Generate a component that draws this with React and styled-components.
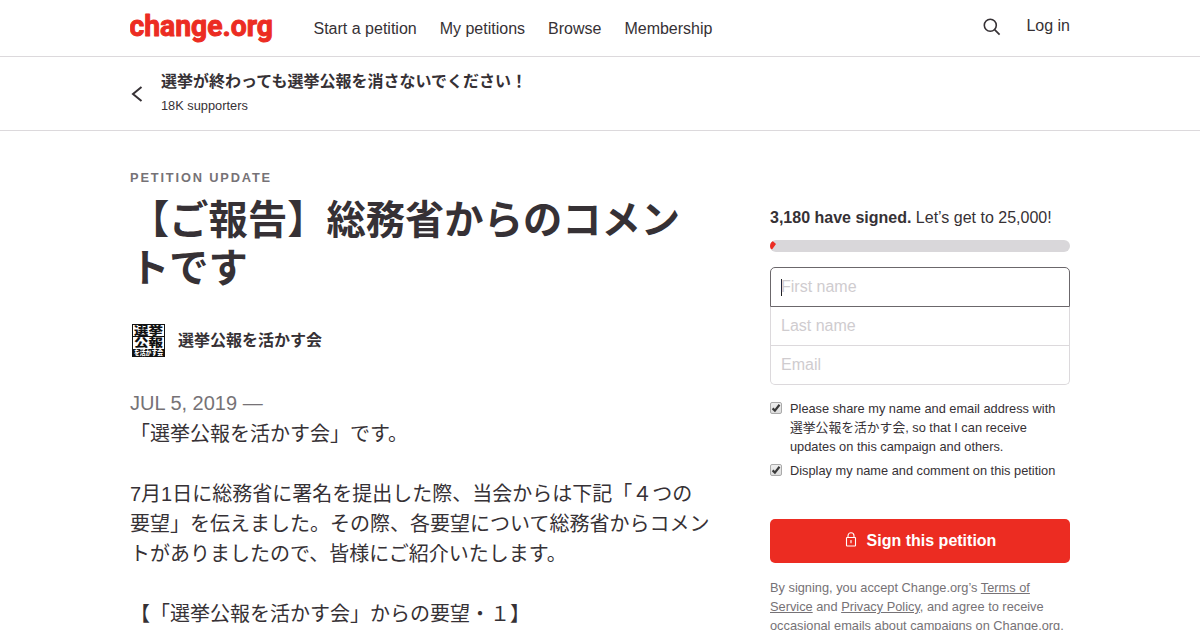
import React from "react";
import styled, { createGlobalStyle } from "styled-components";

const SIGNED = 3180;
const GOAL = 25000;

const App = () => {
  return (
    <>
      <GlobalStyle />
      <Header>
        <Container>
          <Logo />
          <Nav>
            <NavLink>Start a petition</NavLink>
            <NavLink>My petitions</NavLink>
            <NavLink>Browse</NavLink>
            <NavLink>Membership</NavLink>
          </Nav>
          <SearchIcon />
          <Login>Log in</Login>
        </Container>
      </Header>
      <SubHeader>
        <Container>
          <BackIcon />
          <div>
            <PetitionName>選挙が終わっても選挙公報を消さないでください！</PetitionName>
            <Supporters>18K supporters</Supporters>
          </div>
        </Container>
      </SubHeader>
      <Main>
        <Article>
          <Label>PETITION UPDATE</Label>
          <Title>【ご報告】総務省からのコメントです</Title>
          <Author>
            <Avatar />
            <AuthorName>選挙公報を活かす会</AuthorName>
          </Author>
          <PostDate>JUL 5, 2019 —</PostDate>
          <Paragraph>「選挙公報を活かす会」です。</Paragraph>
          <Paragraph>
            7月1日に総務省に署名を提出した際、当会からは下記「４つの
            <br />
            要望」を伝えました。その際、各要望について総務省からコメン
            <br />
            トがありましたので、皆様にご紹介いたします。
          </Paragraph>
          <Paragraph>【「選挙公報を活かす会」からの要望・１】</Paragraph>
        </Article>
        <SignForm />
      </Main>
    </>
  );
};

const Logo = () => (
  <LogoSvg width="146" height="46" viewBox="0 0 146 46">
    <text x="-0.5" y="36" textLength="143.5" lengthAdjust="spacingAndGlyphs">
      change.org
    </text>
  </LogoSvg>
);

const SearchIcon = () => (
  <SearchSvg width="18" height="18" viewBox="0 0 18 18">
    <circle cx="7.3" cy="7.3" r="6" />
    <path d="M11.6 11.6 L16.6 16.6" />
  </SearchSvg>
);

const BackIcon = () => (
  <BackSvg width="12" height="16" viewBox="0 0 12 16">
    <path d="M10.5 1 L2 8 L10.5 15" />
  </BackSvg>
);

const Avatar = () => (
  <AvatarSvg width="33" height="33" viewBox="0 0 33 33">
    <rect x="0.5" y="0.5" width="32" height="32" />
    <path d="M0 12.5 H33" />
    <path d="M0 29 H33" strokeWidth="8" />
    <text x="2" y="10.8" textLength="29" lengthAdjust="spacingAndGlyphs">
      選挙
    </text>
    <text x="2" y="23.4" textLength="29" lengthAdjust="spacingAndGlyphs">
      公報
    </text>
    <AvatarFoot x="2" y="31.4" textLength="29" lengthAdjust="spacingAndGlyphs">
      を活かす会
    </AvatarFoot>
  </AvatarSvg>
);

const LockIcon = () => (
  <LockSvg width="12" height="15" viewBox="0 0 12 15">
    <rect x="1.5" y="5.5" width="9" height="8.5" rx="0.6" />
    <path d="M3 5.5 V3.7 A3 3 0 0 1 9 3.7 V5.5" />
    <path d="M6 8.4 V11.2 M5.3 8.8 H6.7" />
  </LockSvg>
);

const Checkbox = () => (
  <CheckBox>
    <svg width="10" height="10" viewBox="0 0 10 10">
      <path d="M1.6 5.4 L3.9 7.6 L8.5 1.8" />
    </svg>
  </CheckBox>
);

const FillTip = () => (
  <svg width="6" height="12" viewBox="0 0 6 12">
    <path d="M0 3 L2.6 0.9 L6 4 L2.2 9.2 L0 9.2 Z" fill="#ec2c22" />
  </svg>
);

const SignForm = () => {
  return (
    <Form>
      <Signed>
        <b>3,180 have signed.</b> Let’s get to 25,000!
      </Signed>
      <Track>
        <Fill style={{ width: `${(SIGNED / GOAL) * 15}%` }}>
          <FillTip />
        </Fill>
      </Track>
      <Fields>
        <Field $active>
          <Caret />
          First name
        </Field>
        <Field>Last name</Field>
        <Field $last>Email</Field>
      </Fields>
      <CheckRow>
        <Checkbox />
        <span>
          Please share my name and email address with
          <br />
          選挙公報を活かす会, so that I can receive
          <br />
          updates on this campaign and others.
        </span>
      </CheckRow>
      <CheckRow>
        <Checkbox />
        <span>Display my name and comment on this petition</span>
      </CheckRow>
      <SignButton>
        <LockIcon />
        Sign this petition
      </SignButton>
      <Terms>
        By signing, you accept Change.org’s <u>Terms of</u>
        <br />
        <u>Service</u> and <u>Privacy Policy</u>, and agree to receive
        <br />
        occasional emails about campaigns on Change.org.
      </Terms>
    </Form>
  );
};

const GlobalStyle = createGlobalStyle`
  * {
    box-sizing: border-box;
  }
  html, body {
    margin: 0;
    height: 630px;
    overflow: hidden;
  }
  body {
    background: #fff;
    color: #363135;
    font-family: "Liberation Sans", "Noto Sans CJK JP", sans-serif;
    font-size: 16px;
    text-spacing-trim: space-all;
  }
`;

const Container = styled.div`
  display: flex;
  width: 940px;
  margin: 0 auto;
`;

const Header = styled.header`
  height: 57px;
  border-bottom: 1px solid #dcd9dc;
`;

const LogoSvg = styled.svg`
  flex: none;
  fill: #ec2c22;
  stroke: #ec2c22;
  stroke-width: 1;
  stroke-linejoin: round;
  font-family: Roboto, sans-serif;
  font-size: 29.5px;
  font-weight: 700;
`;

const Nav = styled.nav`
  display: flex;
  gap: 23px;
  margin-left: 37.5px;
`;

const NavLink = styled.a`
  line-height: 58px;
  height: 56px;
  white-space: nowrap;
`;

const SearchSvg = styled.svg`
  margin: 18px 25px 0 auto;
  fill: none;
  stroke: #363135;
  stroke-width: 1.6;
`;

const Login = styled.a`
  line-height: 52px;
`;

const SubHeader = styled.div`
  height: 74px;
  border-bottom: 1px solid #dcd9dc;
`;

const BackSvg = styled.svg`
  margin: 29px 18px 0 1px;
  fill: none;
  stroke: #363135;
  stroke-width: 2;
`;

const PetitionName = styled.div`
  height: 24px;
  margin-top: 13px;
  line-height: 24px;
  font-weight: 700;
`;

const Supporters = styled.div`
  line-height: 24px;
  font-size: 12.8px;
`;

const Main = styled.main`
  display: flex;
  justify-content: space-between;
  width: 940px;
  margin: 0 auto;
`;

const Article = styled.article`
  width: 584px;
  padding-top: 37px;
`;

const Label = styled.div`
  height: 20px;
  line-height: 20px;
  font-size: 12.8px;
  font-weight: 700;
  letter-spacing: 1.85px;
  color: #767276;
`;

const Title = styled.h1`
  width: 570px;
  height: 96px;
  margin: 8px 0 0;
  line-height: 48px;
  font-size: 39.3px;
  font-weight: 700;
`;

const Author = styled.div`
  display: flex;
  align-items: center;
  height: 36px;
  margin-top: 30px;
`;

const AvatarSvg = styled.svg`
  flex: none;
  margin-left: 2px;
  fill: none;
  stroke: #111;

  text {
    fill: #111;
    stroke: none;
    font-family: "Noto Sans CJK JP", sans-serif;
    font-size: 11.5px;
    font-weight: 900;
  }
`;

const AvatarFoot = styled.text`
  && {
    fill: #fff;
    font-size: 6.5px;
  }
`;

const AuthorName = styled.div`
  margin-left: 13px;
  padding-top: 1px;
  line-height: 24px;
  font-weight: 700;
`;

const PostDate = styled.div`
  margin-top: 30px;
  line-height: 30px;
  font-size: 20px;
  color: #767276;
`;

const Paragraph = styled.p`
  margin: 0 0 30px;
  line-height: 30px;
  font-size: 20px;
  white-space: nowrap;

  ${PostDate} + & {
    margin-top: 1px;
  }
`;

const Form = styled.aside`
  width: 300px;
  padding-top: 75px;
`;

const Signed = styled.div`
  height: 24px;
  line-height: 24px;
`;

const Track = styled.div`
  height: 12px;
  margin-top: 10px;
  border-radius: 6px;
  background: #d9d7da;
  overflow: hidden;
`;

const Fill = styled.div`
  height: 12px;
  line-height: 0;
`;

const Fields = styled.div`
  margin-top: 15px;
`;

const Field = styled.div`
  display: flex;
  align-items: center;
  height: ${({ $active }) => ($active ? "40px" : "39px")};
  padding: 0 10px;
  border: 1px solid ${({ $active }) => ($active ? "#6b676b" : "#dcd9dc")};
  ${({ $active }) => !$active && "border-top: 0;"}
  border-radius: ${({ $active, $last }) =>
    $active ? "5px 5px 0 0" : $last ? "0 0 5px 5px" : "0"};
  color: #cfcccf;
`;

const Caret = styled.span`
  width: 1px;
  height: 17px;
  margin-right: -1px;
  background: #222;
`;

const CheckRow = styled.label`
  display: flex;
  margin-top: 14px;
  line-height: 19px;
  font-size: 12.8px;
  white-space: nowrap;

  & + & {
    margin-top: 5px;
  }
`;

const CheckBox = styled.span`
  flex: none;
  width: 12px;
  height: 12px;
  margin: 3px 8px 0 0;
  border: 1px solid #aaa;
  border-radius: 2px;
  background: linear-gradient(#eee, #ddd);
  line-height: 0;

  path {
    fill: none;
    stroke: #3a3a3a;
    stroke-width: 2.2;
  }
`;

const SignButton = styled.button`
  display: flex;
  justify-content: center;
  align-items: center;
  width: 300px;
  height: 44px;
  margin-top: 39px;
  padding: 0;
  border: 0;
  border-radius: 5px;
  background: #ec2c22;
  color: #fff;
  font-family: inherit;
  font-size: 16px;
  font-weight: 700;
`;

const LockSvg = styled.svg`
  margin: -4px 10px 0 1px;
  fill: none;
  stroke: #fff;
  stroke-width: 1.1;
`;

const Terms = styled.div`
  margin-top: 15px;
  line-height: 19px;
  font-size: 12.8px;
  color: #767276;
  white-space: nowrap;
`;

export default App;
